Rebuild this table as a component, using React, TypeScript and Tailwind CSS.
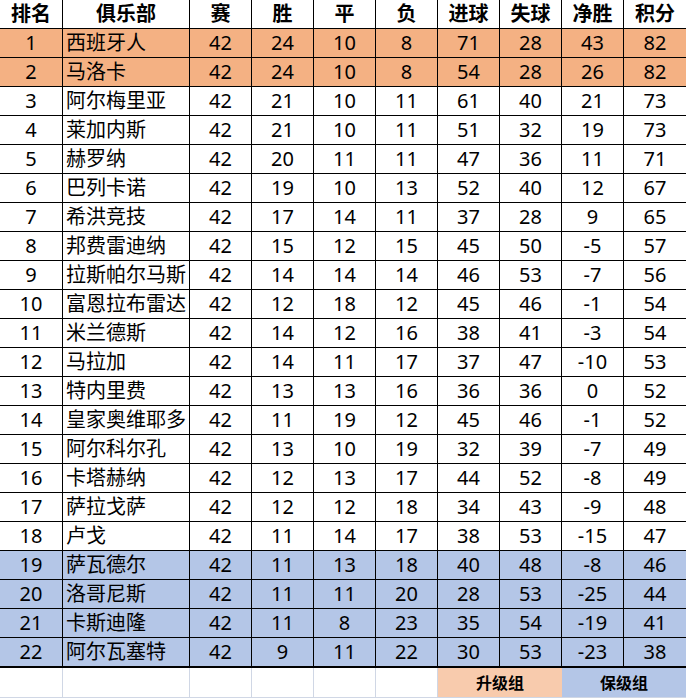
import React from "react";

type Row = [number, string, number, number, number, number, number, number, number, number];

const rows: Row[] = [
  [1, "西班牙人", 42, 24, 10, 8, 71, 28, 43, 82],
  [2, "马洛卡", 42, 24, 10, 8, 54, 28, 26, 82],
  [3, "阿尔梅里亚", 42, 21, 10, 11, 61, 40, 21, 73],
  [4, "莱加内斯", 42, 21, 10, 11, 51, 32, 19, 73],
  [5, "赫罗纳", 42, 20, 11, 11, 47, 36, 11, 71],
  [6, "巴列卡诺", 42, 19, 10, 13, 52, 40, 12, 67],
  [7, "希洪竞技", 42, 17, 14, 11, 37, 28, 9, 65],
  [8, "邦费雷迪纳", 42, 15, 12, 15, 45, 50, -5, 57],
  [9, "拉斯帕尔马斯", 42, 14, 14, 14, 46, 53, -7, 56],
  [10, "富恩拉布雷达", 42, 12, 18, 12, 45, 46, -1, 54],
  [11, "米兰德斯", 42, 14, 12, 16, 38, 41, -3, 54],
  [12, "马拉加", 42, 14, 11, 17, 37, 47, -10, 53],
  [13, "特内里费", 42, 13, 13, 16, 36, 36, 0, 52],
  [14, "皇家奥维耶多", 42, 11, 19, 12, 45, 46, -1, 52],
  [15, "阿尔科尔孔", 42, 13, 10, 19, 32, 39, -7, 49],
  [16, "卡塔赫纳", 42, 12, 13, 17, 44, 52, -8, 49],
  [17, "萨拉戈萨", 42, 12, 12, 18, 34, 43, -9, 48],
  [18, "卢戈", 42, 11, 14, 17, 38, 53, -15, 47],
  [19, "萨瓦德尔", 42, 11, 13, 18, 40, 48, -8, 46],
  [20, "洛哥尼斯", 42, 11, 11, 20, 28, 53, -25, 44],
  [21, "卡斯迪隆", 42, 11, 8, 23, 35, 54, -19, 41],
  [22, "阿尔瓦塞特", 42, 9, 11, 22, 30, 53, -23, 38],
];

const headers = ["排名", "俱乐部", "赛", "胜", "平", "负", "进球", "失球", "净胜", "积分"];

const grid = "grid grid-cols-[63px_127px_62px_62px_62px_62px_62px_62px_62px_62px]";

function rowBg(rank: number) {
  if (rank <= 2) return "bg-[#f4b183]";
  if (rank >= 19) return "bg-[#b4c6e7]";
  return "bg-white";
}

export default function App() {
  return (
    <div
      className="w-[686px] h-[698px] overflow-hidden bg-white text-black text-[20px]"
      style={{ fontFamily: '"Noto Sans", "Noto Sans CJK SC", sans-serif' }}
    >
      <div className={grid}>
        {headers.map((h, i) => (
          <div
            key={h}
            className={`h-[29px] flex items-center justify-center font-bold border-b border-black leading-none ${
              i < 9 ? "border-r" : ""
            }`}
          >
            {h}
          </div>
        ))}
      </div>

      {rows.map((r) => (
        <div key={r[0]} className={`${grid} ${rowBg(r[0])}`}>
          {r.map((v, i) => (
            <div
              key={i}
              className={`flex items-center leading-none border-black ${
                r[0] === 22 ? "h-[30px] border-b-2" : "h-[29px] border-b"
              } ${i < 9 ? "border-r" : ""} ${i === 1 ? "justify-start pl-[3px]" : "justify-center"}`}
            >
              {v}
            </div>
          ))}
        </div>
      ))}

      <div className="flex h-[30px] border-b border-[#d0d7e5]">
        {[63, 127, 62, 62, 62, 62].map((w, i) => (
          <div key={i} className="h-full border-r border-[#d0d7e5]" style={{ width: w }} />
        ))}
        <div className="w-[124px] h-full bg-[#f8cbad] flex items-center justify-center font-bold text-[16px] leading-none">
          升级组
        </div>
        <div className="w-[124px] h-full bg-[#b4c6e7] flex items-center justify-center font-bold text-[16px] leading-none">
          保级组
        </div>
      </div>
    </div>
  );
}
